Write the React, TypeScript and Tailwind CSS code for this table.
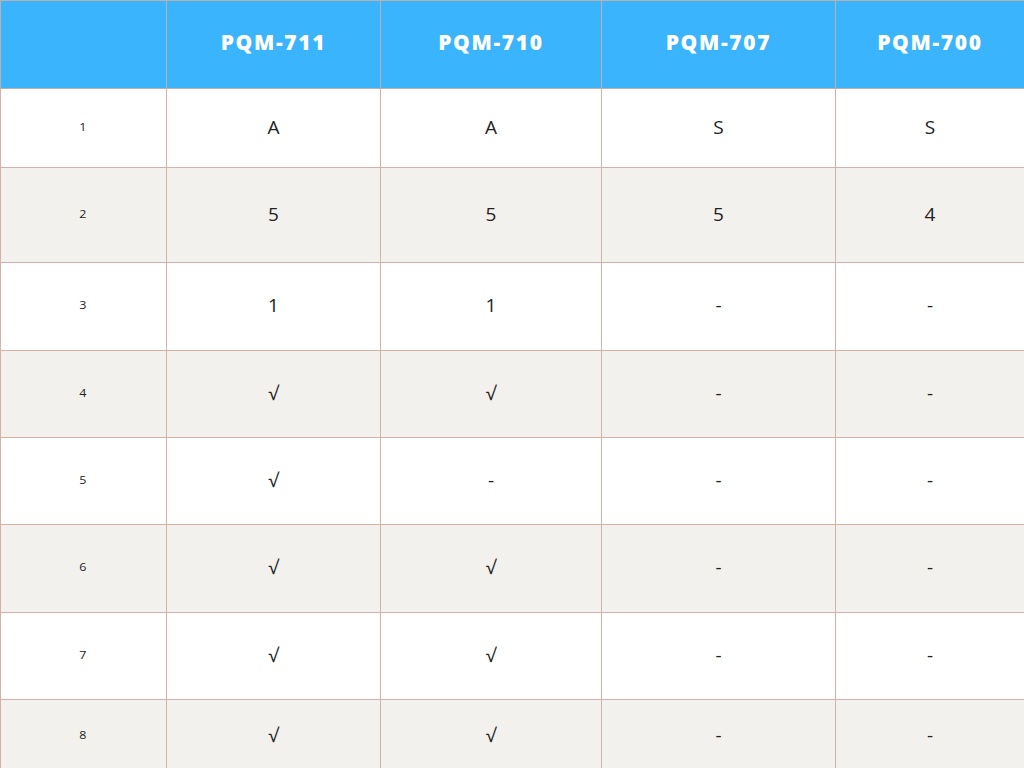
import React from "react";

const cols = ["PQM-711", "PQM-710", "PQM-707", "PQM-700"];
const rows: { n: string; v: string[]; h: string }[] = [
  { n: "1", v: ["A", "A", "S", "S"], h: "h-[79px]" },
  { n: "2", v: ["5", "5", "5", "4"], h: "h-[95px]" },
  { n: "3", v: ["1", "1", "-", "-"], h: "h-[88px]" },
  { n: "4", v: ["√", "√", "-", "-"], h: "h-[87px]" },
  { n: "5", v: ["√", "-", "-", "-"], h: "h-[87px]" },
  { n: "6", v: ["√", "√", "-", "-"], h: "h-[88px]" },
  { n: "7", v: ["√", "√", "-", "-"], h: "h-[87px]" },
  { n: "8", v: ["√", "√", "-", "-"], h: "h-[73px]" },
];

export default function App() {
  return (
    <div
      className="w-[1024px] h-[768px] overflow-hidden bg-white"
      style={{ fontFamily: "'Open Sans', 'Noto Sans', sans-serif" }}
    >
      <div className="grid grid-cols-[167px_214px_221px_234px_188px]">
        <div className="h-[89px] bg-[#3bb4fe] border-l border-t border-b border-r border-[#bdb0ab]" />
        {cols.map((c, i) => (
          <div
            key={c}
            className={`h-[89px] bg-[#3bb4fe] border-t border-b border-[#bdb0ab] flex items-center justify-center text-white font-extrabold text-[21px] tracking-[0.08em] ${i < 3 ? "border-r" : ""}`}
          >
            <span className="-mt-[3px]">{c}</span>
          </div>
        ))}
        {rows.map((r, ri) => {
          const bg = ri % 2 === 1 ? "bg-[#f3f1ee]" : "bg-white";
          return (
            <React.Fragment key={r.n}>
              <div
                className={`${r.h} ${bg} border-l border-r border-b border-[#d3b3a8] flex items-center justify-center text-[10px] text-[#222] tracking-[0.1em]`}
              >
                <span className="-mt-[2px] scale-x-125">{r.n}</span>
              </div>
              {r.v.map((v, i) => (
                <div
                  key={i}
                  className={`${r.h} ${bg} border-b ${i < 3 ? "border-r" : ""} border-[#d3b3a8] flex items-center justify-center text-[19px] text-[#222]`}
                >
                  <span className="-mt-[2px]">{v}</span>
                </div>
              ))}
            </React.Fragment>
          );
        })}
      </div>
    </div>
  );
}
